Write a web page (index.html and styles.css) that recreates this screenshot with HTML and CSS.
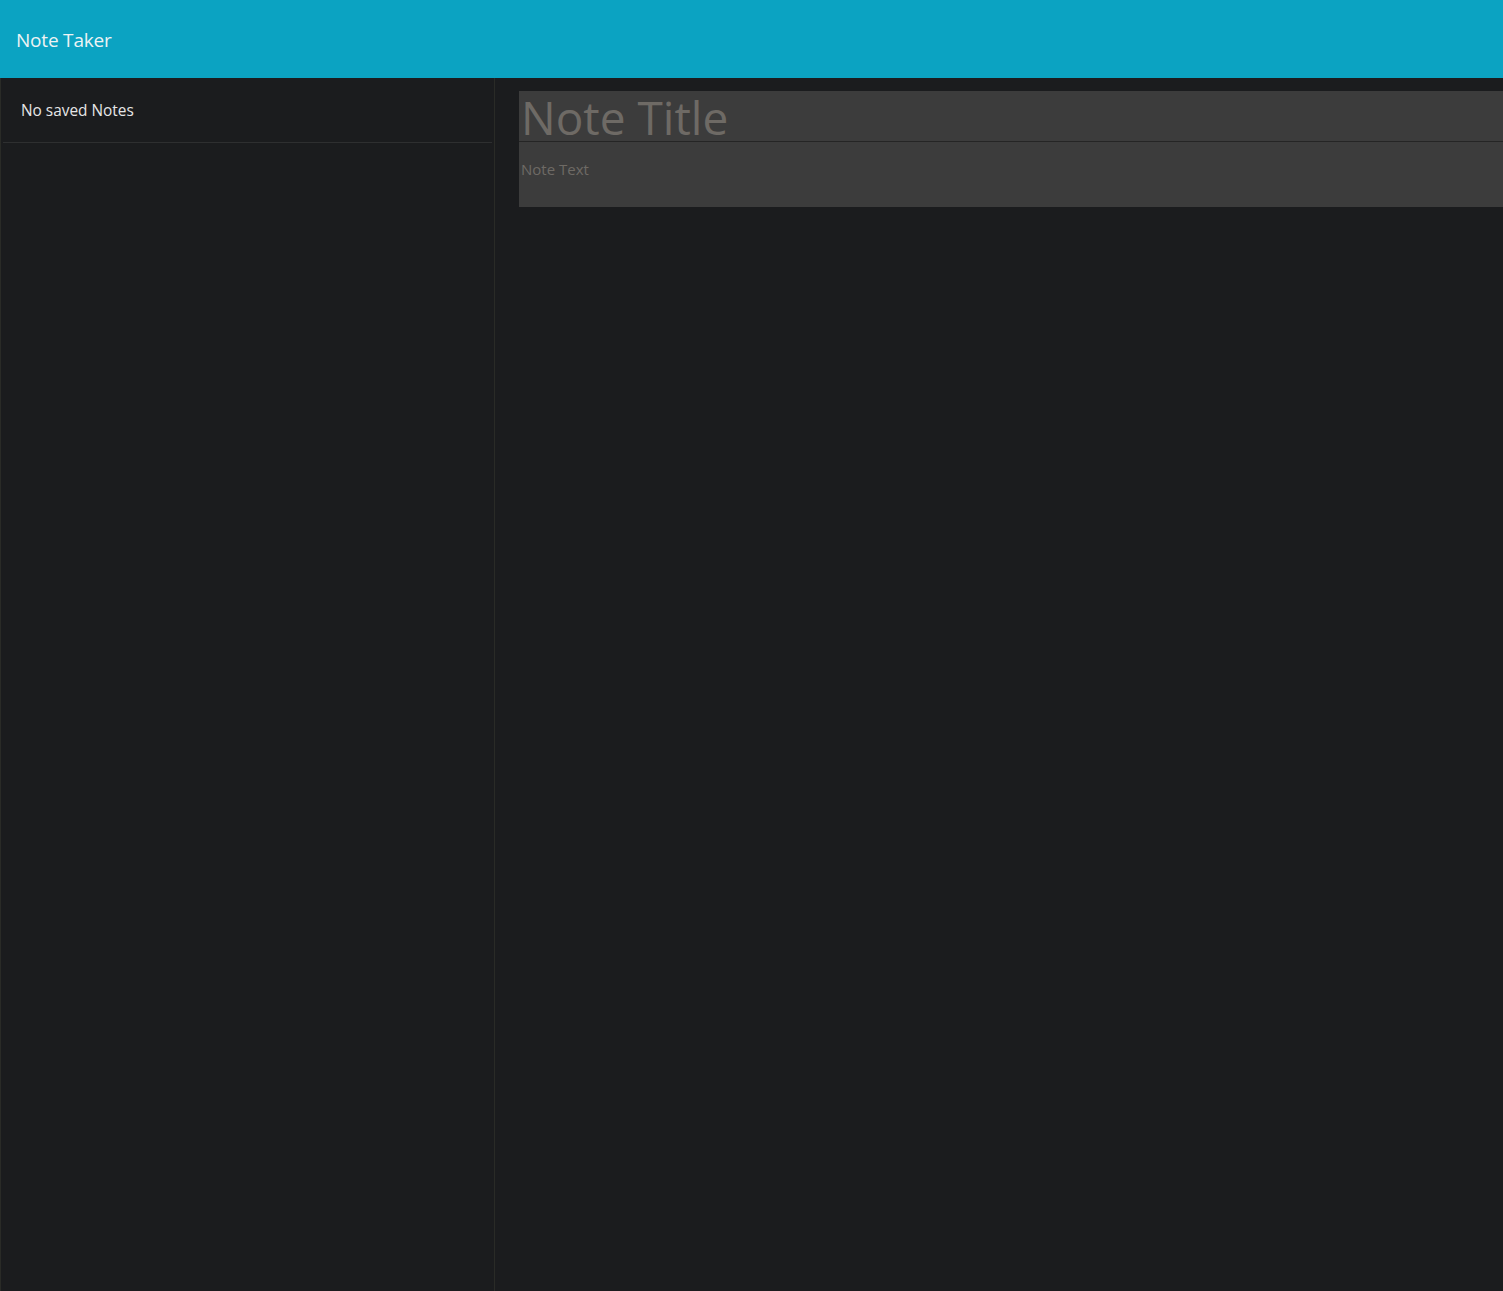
FILE: index.html
```html
<!DOCTYPE html>
<html lang="en">
<head>
<meta charset="utf-8">
<title>Note Taker</title>
<link rel="stylesheet" href="styles.css">
</head>
<body>
<nav class="navbar">
  <span class="brand">Note Taker</span>
</nav>
<div class="main">
  <aside class="sidebar">
    <ul class="list">
      <li class="list-item">No saved Notes</li>
    </ul>
  </aside>
  <section class="editor">
    <input class="note-title" placeholder="Note Title">
    <textarea class="note-text" placeholder="Note Text"></textarea>
  </section>
</div>
</body>
</html>
```
FILE: styles.css
```css
html, body {
  margin: 0;
  padding: 0;
  height: 100%;
}
body {
  background: #1b1c1e;
  font-family: "Open Sans", "Noto Sans", sans-serif;
  display: flex;
  flex-direction: column;
  overflow: hidden;
}
.navbar {
  height: 78px;
  flex: none;
  background: #0ba3c2;
  display: flex;
  align-items: center;
  padding-left: 16px;
  padding-top: 2px;
  box-sizing: border-box;
}
.brand {
  color: #eef3f4;
  font-size: 19px;
  letter-spacing: -0.2px;
}
.main {
  flex: 1;
  display: flex;
}
.sidebar {
  width: 493px;
  flex: none;
  border-left: 1px solid #2a2b27;
  border-right: 1px solid #2a2b27;
}
.list {
  list-style: none;
  margin: 0;
  padding: 0 2px;
}
.list-item {
  color: #e6e6e6;
  font-size: 15.4px;
  padding: 22px 19px 20px 18px;
  height: 22px;
  line-height: 22px;
  border-bottom: 1px solid #2e2f30;
}
.editor {
  flex: 1;
  padding: 13px 0 0 24px;
  display: flex;
  flex-direction: column;
  align-items: stretch;
}
.note-title, .note-text {
  display: block;
  border: none;
  outline: none;
  background: #3c3c3c;
  color: #ddd;
  font-family: "Open Sans", "Noto Sans", sans-serif;
  margin: 0;
  resize: none;
}
.note-title {
  font-size: 46px;
  padding: 2px 0 0 2px;
  box-sizing: content-box;
  height: 48px;
  border-bottom: 1px solid #252525;
  line-height: 50px;
}
.note-text {
  height: 65px;
  font-size: 15px;
  padding: 17px 2px 0 2px;
  box-sizing: border-box;
}
.note-title::placeholder, .note-text::placeholder {
  color: #6e6a65;
  opacity: 1;
}
```
